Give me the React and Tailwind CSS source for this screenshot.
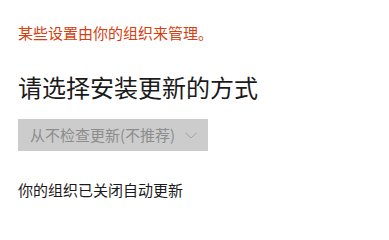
const ChevronDown = () => (
  <svg width="12" height="7" viewBox="0 0 12 7" fill="none" className="shrink-0">
    <path d="M0.5 0.8 L6 6 L11.5 0.8" stroke="#a3a3a3" strokeWidth="1" />
  </svg>
);

const App = () => {
  return (
    <div
      className="w-[389px] h-[218px] bg-white pt-[23px] px-[18px] overflow-hidden"
      style={{ fontFamily: '"Noto Sans CJK SC", "Noto Sans", sans-serif' }}
    >
      <p className="text-[15px] leading-5 text-[#d4400f]">某些设置由你的组织来管理。</p>

      <h1 className="mt-[28px] text-[24px] leading-8 text-[#1a1a1a]">请选择安装更新的方式</h1>

      <div className="mt-[16px] w-[190px] h-8 bg-[#cccccc] flex items-center justify-between pl-[12px] pr-[11px]">
        <span className="text-[15px] leading-5 text-[#8c8c8c]">从不检查更新(不推荐)</span>
        <ChevronDown />
      </div>

      <p className="mt-[29px] text-[15px] leading-5 text-[#1a1a1a]">你的组织已关闭自动更新</p>
    </div>
  );
};

export default App;
